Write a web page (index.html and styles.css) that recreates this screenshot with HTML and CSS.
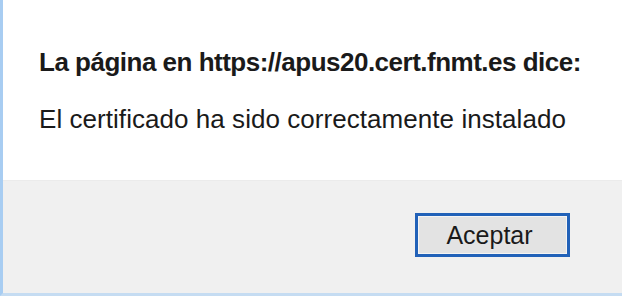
FILE: index.html
```html
<!DOCTYPE html>
<html>
<head>
<meta charset="utf-8">
<link rel="stylesheet" href="styles.css">
</head>
<body>
<div class="dialog">
  <div class="content">
    <div class="title">La página en https://apus20.cert.fnmt.es dice:</div>
    <div class="message">El certificado ha sido correctamente instalado</div>
  </div>
  <div class="footer">
    <button class="btn">Aceptar</button>
  </div>
</div>
</body>
</html>
```
FILE: styles.css
```css
html, body {
  margin: 0;
  padding: 0;
}
body {
  width: 622px;
  height: 296px;
  overflow: hidden;
  background: #ffffff;
  font-family: "Liberation Sans", Arial, sans-serif;
}
.dialog {
  width: 622px;
  height: 296px;
  box-sizing: border-box;
  border-left: 3px solid #a8cdf2;
  border-bottom: 3px solid #c5dcf2;
  display: flex;
  flex-direction: column;
}
.content {
  height: 180px;
  box-sizing: border-box;
  padding: 47px 0 0 36px;
  background: #ffffff;
  color: #1a1a1a;
}
.title {
  font-size: 26px;
  font-weight: bold;
  line-height: 30px;
  letter-spacing: -0.5px;
}
.message {
  font-size: 26px;
  line-height: 30px;
  margin-top: 27px;
  letter-spacing: 0.05px;
}
.footer {
  flex: 1;
  background: #f0f0f0;
  border-top: 1px solid #ebebeb;
  display: flex;
  justify-content: flex-end;
  align-items: flex-start;
  padding: 32px 52px 0 0;
}
.btn {
  width: 155px;
  height: 44px;
  box-sizing: border-box;
  border: 3px solid #2161b8;
  background: #e3e3e3;
  box-shadow: inset 0 0 0 1px #f4f4f4;
  font-family: "Liberation Sans", Arial, sans-serif;
  font-size: 25px;
  line-height: 36px;
  color: #1a1a1a;
  padding: 0 6px 0 0;
}
```
